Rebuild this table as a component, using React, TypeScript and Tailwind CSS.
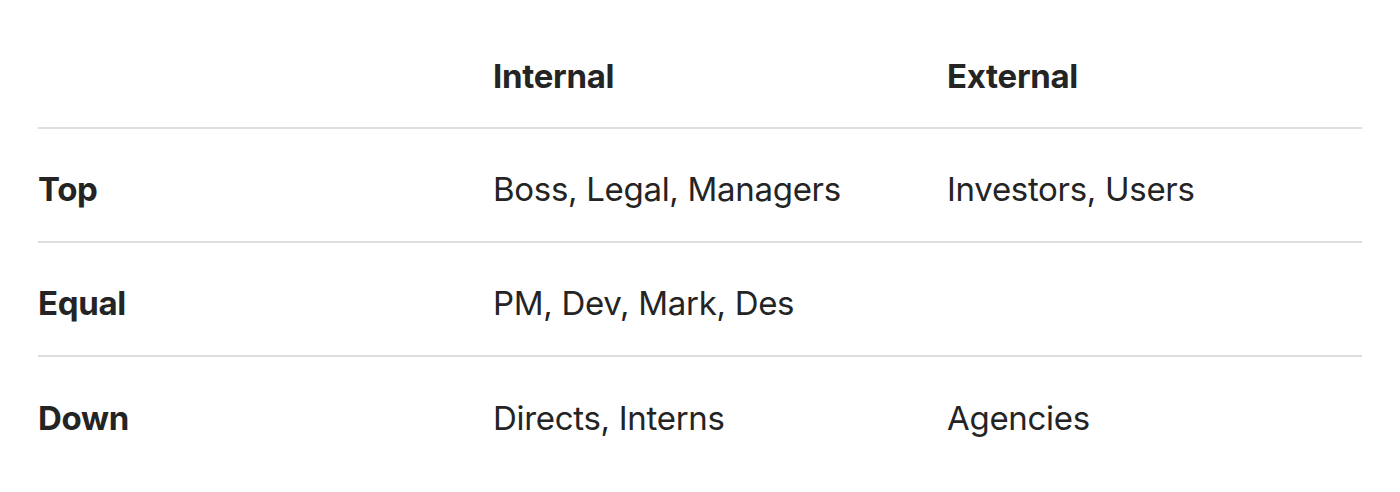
const rows = [
  { label: "Top", internal: "Boss, Legal, Managers", external: "Investors, Users" },
  { label: "Equal", internal: "PM, Dev, Mark, Des", external: "" },
  { label: "Down", internal: "Directs, Interns", external: "Agencies" },
];

export default function App() {
  return (
    <div className="h-[492px] w-[1400px] bg-white px-[38px] pt-[16px] text-[#242424] font-['Inter',sans-serif] text-[33px] tracking-[-0.3px]">
      <div className="grid h-[113px] grid-cols-[455px_454px_1fr] items-center border-b-2 border-[#dedee2] pt-[10px] font-bold">
        <div />
        <div>Internal</div>
        <div>External</div>
      </div>
      {rows.map((r, i) => (
        <div
          key={r.label}
          className={
            i < rows.length - 1
              ? "grid h-[114px] grid-cols-[455px_454px_1fr] items-center border-b-2 border-[#dedee2] pt-[10px]"
              : "grid h-[114px] grid-cols-[455px_454px_1fr] items-center pt-[10px]"
          }
        >
          <div className="font-bold">{r.label}</div>
          <div>{r.internal}</div>
          <div>{r.external}</div>
        </div>
      ))}
    </div>
  );
}
